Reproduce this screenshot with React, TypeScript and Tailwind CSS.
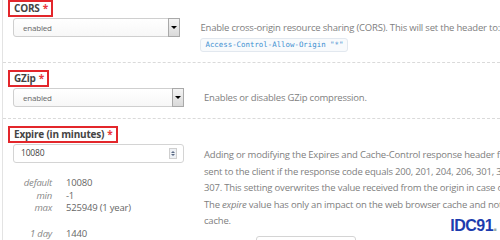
import React from 'react';

function Label({ text }: { text: string }) {
  return (
    <div className="pl-[5px]">
      <span className="inline-flex h-[17px] items-center border-2 border-[#e3262b] pl-[4px] pr-[3px] text-[10px] font-bold text-[#444]">
        {text}
        <span className="ml-[3px] text-[#e8383d]">*</span>
      </span>
    </div>
  );
}

function Select({ value }: { value: string }) {
  return (
    <div className="ml-[10px] flex h-[19px] w-[171px] items-center rounded-[3px] border border-[#cfcfcf] bg-gradient-to-b from-white to-[#f7f7f7]">
      <span className="flex-1 pl-[9px] text-[8px] text-[#666]">{value}</span>
      <span className="mr-[-1px] flex h-[19px] w-[12px] items-center justify-center border border-[#a9a9a9] bg-gradient-to-b from-[#f4f4f4] to-[#d9d9d9]">
        <span className="h-0 w-0 border-x-[3px] border-t-[3px] border-x-transparent border-t-black" />
      </span>
    </div>
  );
}

export default function App() {
  const stats = [
    { k: 'default', v: '10080' },
    { k: 'min', v: '-1' },
    { k: 'max', v: '525949 (1 year)' },
  ];

  return (
    <div className="relative h-[240px] w-[500px] overflow-hidden bg-white font-['Open_Sans',sans-serif] text-[9.5px] tracking-[-0.2px] text-[#808080]">
      <div className="ml-[2px] h-full border-l border-[#e3e3e3]">
        {/* CORS */}
        <section className="h-[63px] border-b border-dashed border-[#dadada]">
          <Label text="CORS" />
          <div className="mt-[1px] flex">
            <Select value="enabled" />
            <div className="ml-[20px] whitespace-nowrap">
              <p className="h-[19px] leading-[19px]">
                Enable cross-origin resource sharing (CORS). This will set the header to:
              </p>
              <code className="inline-flex h-[14px] items-center rounded-[3px] border border-[#e2e8ef] bg-[#f8fafc] px-[4px] font-['DejaVu_Sans_Mono',monospace] text-[7.4px] tracking-normal text-[#3d8fd1]">
                Access-Control-Allow-Origin "*"
              </code>
            </div>
          </div>
        </section>

        {/* GZip */}
        <section className="h-[56px] border-b border-dashed border-[#dadada] pt-[7px]">
          <Label text="GZip" />
          <div className="mt-[1px] flex">
            <Select value="enabled" />
            <p className="ml-[20px] h-[19px] whitespace-nowrap leading-[19px]">
              Enables or disables GZip compression.
            </p>
          </div>
        </section>

        {/* Expire */}
        <section className="pt-[7px]">
          <Label text="Expire (in minutes)" />
          <div className="mt-[1px] flex">
            <div className="w-[181px] shrink-0">
              <div className="ml-[10px] flex h-[19px] w-[171px] items-center rounded-[3px] border border-[#d4d4d4] bg-white">
                <span className="flex-1 pl-[7px] text-[8.5px] text-[#444]">10080</span>
                <span className="mr-[6px] flex h-[11px] w-[8px] flex-col items-center justify-center gap-[1px] border border-[#cfcfcf] bg-[#eef1f5]">
                  <span className="h-0 w-0 border-x-[2px] border-b-[2px] border-x-transparent border-b-[#5a6b86]" />
                  <span className="h-0 w-0 border-x-[2px] border-t-[2px] border-x-transparent border-t-[#5a6b86]" />
                </span>
              </div>
              <div className="mt-[14px] grid grid-cols-[49px_1fr] gap-x-[14px] leading-[12.7px] text-[#666]">
                {stats.map((s) => (
                  <React.Fragment key={s.k}>
                    <span className="text-right italic text-[#888]">{s.k}</span>
                    <span>{s.v}</span>
                  </React.Fragment>
                ))}
                <span className="mt-[13px] text-right italic text-[#888]">1 day</span>
                <span className="mt-[13px]">1440</span>
              </div>
            </div>
            <div className="ml-[20px] mt-[3px] whitespace-nowrap leading-[16.5px]">
              <p>Adding or modifying the Expires and Cache-Control response header fields</p>
              <p>sent to the client if the response code equals 200, 201, 204, 206, 301, 302, 303,</p>
              <p>307. This setting overwrites the value received from the origin in case of</p>
              <p>
                The <em>expire</em> value has only an impact on the web browser cache and not the CDN
              </p>
              <p>cache.</p>
              <div className="mt-[6px] flex items-start">
                <span className="ml-[22px] w-[30px] leading-[10px] text-[#999]">·</span>
                <span className="h-[14px] w-[100px] rounded-[3px] border border-[#d4d4d4]" />
              </div>
            </div>
          </div>
        </section>
      </div>

      <span className="absolute bottom-[2px] right-[3px] font-['Liberation_Sans',sans-serif] text-[16px] font-bold tracking-[-0.5px] text-[#1d3cae]">
        IDC91<span className="text-[#9aa]">.</span>
      </span>
    </div>
  );
}
